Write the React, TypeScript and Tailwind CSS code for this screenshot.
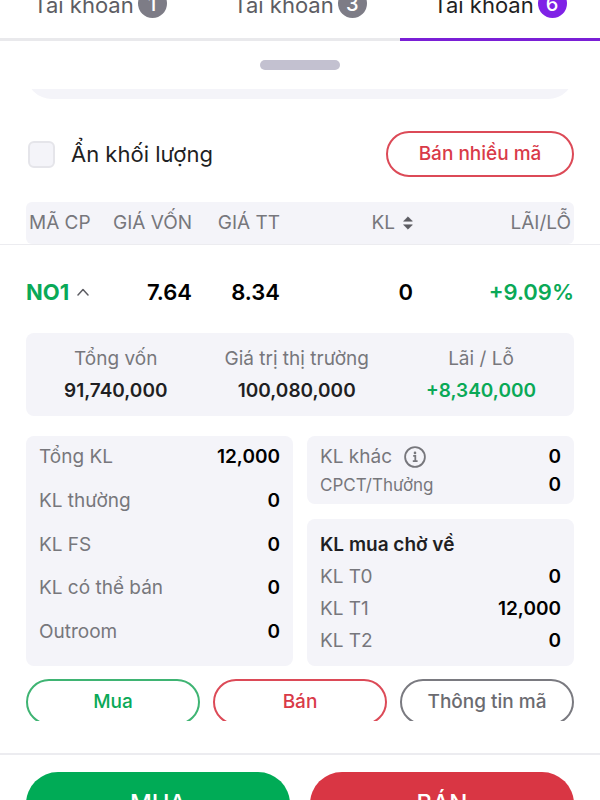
import { clsx } from "clsx";

const TABS = [
  { count: 1, active: false },
  { count: 3, active: false },
  { count: 6, active: true },
];

const SUMMARY = [
  { label: "Tổng vốn", value: "91,740,000", positive: false },
  { label: "Giá trị thị trường", value: "100,080,000", positive: false },
  { label: "Lãi / Lỗ", value: "+8,340,000", positive: true },
];

const VOLUMES = [
  { label: "Tổng KL", value: "12,000" },
  { label: "KL thường", value: "0" },
  { label: "KL FS", value: "0" },
  { label: "KL có thể bán", value: "0" },
  { label: "Outroom", value: "0" },
];

const PENDING = [
  { label: "KL T0", value: "0" },
  { label: "KL T1", value: "12,000" },
  { label: "KL T2", value: "0" },
];

function SortIcon() {
  return (
    <svg viewBox="0 0 10 14" className="h-[14px] w-[10px]" fill="#5d5d63">
      <path d="M5 0.8 9.4 5.2H0.6Z" stroke="#5d5d63" strokeWidth="0.6" strokeLinejoin="round" />
      <path d="M5 13.2 0.6 8.8H9.4Z" stroke="#5d5d63" strokeWidth="0.6" strokeLinejoin="round" />
    </svg>
  );
}

function CaretIcon() {
  return (
    <svg viewBox="0 0 12 8" className="h-2 w-3" fill="none" stroke="#5d5d63" strokeWidth="1.5">
      <path d="M1 7 6 1.6 11 7" strokeLinecap="round" strokeLinejoin="round" />
    </svg>
  );
}

function InfoIcon() {
  return (
    <svg viewBox="0 0 22 22" className="size-[22px]" fill="none" stroke="#77777c" strokeWidth="1.8">
      <circle cx="11" cy="11" r="9.9" />
      <path d="M9.2 9.8h2.1v5.2M8.8 15.2h4.8" />
      <circle cx="11" cy="6.9" r="1.3" fill="#77777c" stroke="none" />
    </svg>
  );
}

function Row({ label, value }: { label: string; value: string }) {
  return (
    <div className="flex items-center justify-between">
      <dt className="text-[#77777c]">{label}</dt>
      <dd className="font-semibold text-black">{value}</dd>
    </div>
  );
}

function OutlineButton({ children, className }: { children: string; className: string }) {
  return (
    <button
      type="button"
      className={clsx("h-[46px] rounded-full border-2 bg-white text-[19px] font-medium", className)}
    >
      {children}
    </button>
  );
}

export default function App() {
  return (
    <div className="flex h-screen flex-col overflow-hidden bg-white font-['Inter','Noto_Sans',sans-serif] text-[#1f1f23]">
      <nav className="flex h-[41px] shrink-0 items-end overflow-hidden">
        {TABS.map((tab) => (
          <button
            key={tab.count}
            type="button"
            className={clsx(
              "flex h-14 flex-1 items-start justify-center gap-1 border-b-3 pt-1 text-[22px] leading-8",
              tab.active ? "border-[#7a1fd6] text-[#1f1f23]" : "border-[#e9e9ec] text-[#5d5d63]"
            )}
          >
            Tài khoản
            <span
              className={clsx(
                "flex size-[29px] items-center justify-center rounded-full text-xl font-medium text-white",
                tab.active ? "bg-[#7f22e6]" : "bg-[#7d7c86]"
              )}
            >
              {tab.count}
            </span>
          </button>
        ))}
      </nav>

      <div className="flex h-12 shrink-0 items-center justify-center">
        <div className="h-[10px] w-20 rounded-full bg-[#c3c1d0]" />
      </div>

      <main className="flex min-h-0 flex-1 flex-col overflow-hidden">
        <div className="flex h-[10px] shrink-0 items-end overflow-hidden px-[26px]">
          <div className="h-12 w-full rounded-b-[26px] bg-[#f4f4f9]" />
        </div>

        <div className="mt-8 flex items-center justify-between px-[26px]">
          <label className="flex items-center gap-4 pl-[2px] text-[22px]">
            <input
              type="checkbox"
              className="size-[27px] appearance-none rounded-md border-2 border-[#e5e5ea] bg-[#f4f4f9] checked:bg-[#7f22e6]"
            />
            Ẩn khối lượng
          </label>
          <OutlineButton className="w-[188px] border-[#dc4a57] text-[#d93a48]">Bán nhiều mã</OutlineButton>
        </div>

        <table className="mt-[25px] w-full table-fixed border-separate border-spacing-0 text-right">
          <colgroup>
            <col className="w-[26px]" />
            <col className="w-20" />
            <col className="w-[86px]" />
            <col className="w-[88px]" />
            <col className="w-[133px]" />
            <col />
            <col className="w-[26px]" />
          </colgroup>
          <thead>
            <tr className="h-[42px] text-[19px] text-[#77777c] *:font-normal">
              <td />
              <th className="rounded-l-md bg-[#f4f4f9] pl-[3px] text-left">MÃ CP</th>
              <th className="bg-[#f4f4f9]">GIÁ VỐN</th>
              <th className="bg-[#f4f4f9]">GIÁ TT</th>
              <th className="bg-[#f4f4f9]">
                <button type="button" className="inline-flex items-center gap-2">
                  KL
                  <SortIcon />
                </button>
              </th>
              <th className="rounded-r-md bg-[#f4f4f9] pr-[3px]">LÃI/LỖ</th>
              <td />
            </tr>
          </thead>
          <tbody>
            <tr className="h-[89px] text-[22px] font-semibold text-black *:border-t *:border-[#ececf0] *:pt-[6px]">
              <td />
              <td className="text-left text-[#0aa957]">
                <button type="button" className="flex items-center gap-2 font-bold">
                  NO1
                  <CaretIcon />
                </button>
              </td>
              <td>7.64</td>
              <td>8.34</td>
              <td>0</td>
              <td className="text-[#0aa957]">+9.09%</td>
              <td />
            </tr>
          </tbody>
        </table>

        <div className="flex flex-col px-[26px] text-[19px] leading-8">
          <dl className="flex h-[83px] items-center justify-between rounded-lg bg-[#f4f4f9] px-[38px] text-center">
            {SUMMARY.map((item) => (
              <div key={item.label}>
                <dt className="text-[#77777c]">{item.label}</dt>
                <dd className={clsx("font-semibold", item.positive && "text-[#0aa957]")}>{item.value}</dd>
              </div>
            ))}
          </dl>

          <div className="mt-5 grid grid-cols-2 gap-[14px]">
            <dl className="flex flex-col justify-between rounded-lg bg-[#f4f4f9] px-[13px] pt-[5px] pb-[18px]">
              {VOLUMES.map((item) => (
                <Row key={item.label} {...item} />
              ))}
            </dl>

            <div className="flex flex-col gap-[15px]">
              <dl className="rounded-lg bg-[#f4f4f9] px-[13px] pt-[7px] pb-[5px] leading-7">
                <div className="flex items-center justify-between">
                  <dt className="flex items-center gap-3 text-[#77777c]">
                    KL khác
                    <InfoIcon />
                  </dt>
                  <dd className="font-semibold text-black">0</dd>
                </div>
                <div className="flex items-center justify-between">
                  <dt className="text-[17px] leading-7 text-[#77777c]">CPCT/Thưởng</dt>
                  <dd className="font-semibold text-black">0</dd>
                </div>
              </dl>

              <div className="rounded-lg bg-[#f4f4f9] px-[13px] pt-[10px] pb-[9px]">
                <h2 className="font-semibold">KL mua chờ về</h2>
                <dl>
                  {PENDING.map((item) => (
                    <Row key={item.label} {...item} />
                  ))}
                </dl>
              </div>
            </div>
          </div>
        </div>

        <div className="mt-[13px] grid h-[42px] shrink-0 grid-cols-3 gap-[13px] overflow-hidden px-[26px]">
          <OutlineButton className="border-[#3fb473] text-[#0aa957]">Mua</OutlineButton>
          <OutlineButton className="border-[#dc4a57] text-[#d93a48]">Bán</OutlineButton>
          <OutlineButton className="border-[#7a7a80] text-[#6b6b70]">Thông tin mã</OutlineButton>
        </div>
      </main>

      <footer className="h-[47px] shrink-0 border-t-2 border-[#ececf0] px-[26px] pt-[17px]">
        <div className="grid grid-cols-2 gap-5 text-2xl font-medium text-white">
          <button type="button" className="h-16 rounded-full bg-[#00ab56]">
            MUA
          </button>
          <button type="button" className="h-16 rounded-full bg-[#d93644]">
            BÁN
          </button>
        </div>
      </footer>
    </div>
  );
}
